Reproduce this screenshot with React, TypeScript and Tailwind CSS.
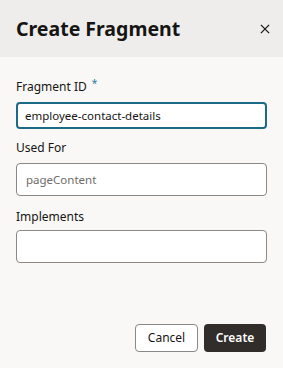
import React from "react";

export default function App() {
  return (
    <div className="w-[283px] h-[368px] flex flex-col bg-[#f9f8f6] font-['Noto_Sans',sans-serif] text-[#161513]">
      <div className="h-[57px] bg-[#efedeb] flex items-center justify-between pl-4 pr-[13px]">
        <h1 className="text-[19.5px] font-bold leading-none">Create Fragment</h1>
        <button className="w-[11px] h-[11px] flex items-center justify-center">
          <svg viewBox="0 0 11 11" className="w-[10px] h-[10px]" stroke="#161513" strokeWidth="1.4">
            <path d="M1 1l9 9M10 1l-9 9" />
          </svg>
        </button>
      </div>

      <div className="flex flex-col px-4 pt-[22px]">
        <label className="text-[12px] leading-[16px] flex">
          Fragment ID
          <span className="text-[#227e9e] text-[10px] leading-none ml-[5px] mt-[-1px]">*</span>
        </label>
        <div className="mt-[7px] h-[27px] rounded-[4px] border-2 border-[#1b6b86] bg-white flex items-center px-[7px] text-[11.5px]">
          employee-contact-details
        </div>

        <label className="text-[12px] leading-[16px] mt-[11px]">Used For</label>
        <div className="mt-[7px] h-[33px] rounded-[4px] border border-[#8b8885] bg-white flex items-center px-[9px] text-[11.5px] text-[#6f6c69]">
          pageContent
        </div>

        <label className="text-[12px] leading-[16px] mt-[13px]">Implements</label>
        <div className="mt-[5px] h-[33px] rounded-[4px] border border-[#8b8885] bg-white" />
      </div>

      <div className="mt-auto mb-[16px] flex justify-end gap-[6px] pr-[17px]">
        <button className="w-[63px] h-[28px] rounded-[4px] border border-[#8b8885] bg-white text-[12px] text-[#161513]">
          Cancel
        </button>
        <button className="w-[62px] h-[28px] rounded-[4px] bg-[#312d2a] text-[12px] font-semibold text-white">
          Create
        </button>
      </div>
    </div>
  );
}
